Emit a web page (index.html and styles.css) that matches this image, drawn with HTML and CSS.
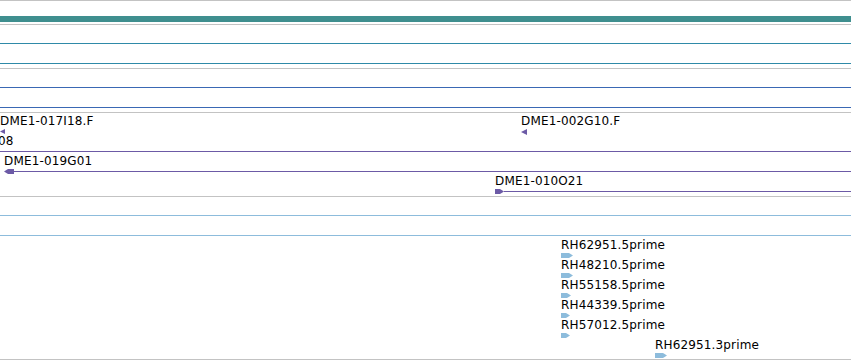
FILE: index.html
```html
<!DOCTYPE html>
<html lang="en">
<head>
  <meta charset="UTF-8" />
  <title>Track view</title>
  <link rel="stylesheet" href="styles.css">
</head>
<body>
  <div class="view">
    <!-- gene track -->
    <div class="track track-gene">
      <div class="bar bar-gene" style="top:15px"></div>
    </div>

    <!-- mRNA track -->
    <div class="track track-mrna">
      <div class="bar line-teal" style="top:18px"></div>
      <div class="bar line-teal" style="top:38px"></div>
    </div>

    <!-- CDS track -->
    <div class="track track-cds">
      <div class="bar line-blue" style="top:18px"></div>
      <div class="bar line-blue" style="top:38px"></div>
    </div>

    <!-- BAC ends -->
    <div class="track track-bac">
      <div class="feat" style="left:0;top:1px">
        <div class="label">DME1-017I18.F</div>
        <svg class="glyph" width="5" height="5"><polygon class="purple" points="0,2.5 5,0 5,5"/></svg>
      </div>
      <div class="feat" style="left:-2px;top:21px">
        <div class="label">08</div>
      </div>
      <div class="feat" style="left:521px;top:1px">
        <div class="label">DME1-002G10.F</div>
        <svg class="glyph" width="6" height="6"><polygon class="purple" points="0,3 6,0 6,6"/></svg>
      </div>

      <div class="bar line-purple" style="top:38px"></div>

      <div class="feat feat-wide" style="left:4px;top:41px">
        <div class="label">DME1-019G01</div>
        <div class="span">
          <svg width="10" height="5"><polygon class="purple" points="0,2.5 4,0 10,0 10,5 4,5"/></svg>
          <span class="stem"></span>
        </div>
      </div>

      <div class="feat feat-wide" style="left:495px;top:61px">
        <div class="label">DME1-010O21</div>
        <div class="span">
          <svg width="9" height="5"><polygon class="purple" points="0,0 5,0 9,2.5 5,5 0,5"/></svg>
          <span class="stem"></span>
        </div>
      </div>
    </div>

    <!-- cDNA 5'/3' reads -->
    <div class="track track-est">
      <div class="bar line-sky" style="top:18px"></div>
      <div class="bar line-sky" style="top:38px"></div>

      <div class="feat" style="left:561px;top:41px">
        <div class="label">RH62951.5prime</div>
        <svg class="glyph" width="12" height="5"><polygon class="sky" points="0,0 8,0 12,2.5 8,5 0,5"/></svg>
      </div>
      <div class="feat" style="left:561px;top:61px">
        <div class="label">RH48210.5prime</div>
        <svg class="glyph" width="12" height="5"><polygon class="sky" points="0,0 8,0 12,2.5 8,5 0,5"/></svg>
      </div>
      <div class="feat" style="left:561px;top:81px">
        <div class="label">RH55158.5prime</div>
        <svg class="glyph" width="10" height="5"><polygon class="sky" points="0,0 6,0 10,2.5 6,5 0,5"/></svg>
      </div>
      <div class="feat" style="left:561px;top:101px">
        <div class="label">RH44339.5prime</div>
        <svg class="glyph" width="9" height="5"><polygon class="sky" points="0,0 5,0 9,2.5 5,5 0,5"/></svg>
      </div>
      <div class="feat" style="left:561px;top:121px">
        <div class="label">RH57012.5prime</div>
        <svg class="glyph" width="9" height="5"><polygon class="sky" points="0,0 5,0 9,2.5 5,5 0,5"/></svg>
      </div>
      <div class="feat" style="left:655px;top:141px">
        <div class="label">RH62951.3prime</div>
        <svg class="glyph" width="12" height="5"><polygon class="sky" points="0,0 8,0 12,2.5 8,5 0,5"/></svg>
      </div>
    </div>
  </div>
</body>
</html>
```

FILE: styles.css
```css
* {
  box-sizing: content-box;
}

body {
  margin: 0;
  padding: 0;
  background: #fff;
  font-family: 'DejaVu Sans', sans-serif;
  overflow: hidden;
}

.view {
  width: 851px;
  display: flex;
  flex-direction: column;
  border-bottom: 1px solid #c3c3c3;
}

.track {
  position: relative;
  overflow: hidden;
  border-top: 1px solid #c3c3c3;
}

.track-gene { height: 23px; }
.track-mrna { height: 43px; }
.track-cds  { height: 43px; }
.track-bac  { height: 83px; }
.track-est  { height: 162px; }

.bar {
  position: absolute;
  left: 0;
  right: 0;
  height: 1px;
}

.bar-gene   { height: 6px; background: #3f8f8f; }
.line-teal  { background: #2f8aa8; }
.line-blue  { background: #3a68b4; }
.line-purple { background: #6c5aa6; }
.line-sky   { background: #8dbcdc; }

.feat {
  position: absolute;
  display: flex;
  flex-direction: column;
  align-items: flex-start;
}

.feat-wide {
  right: 0;
}

.label {
  font-size: 12px;
  line-height: 14px;
  height: 14px;
  letter-spacing: 0.15px;
  color: #000;
  white-space: nowrap;
}

.glyph {
  display: block;
  margin-top: 1px;
}

.span {
  display: flex;
  align-items: center;
  width: 100%;
  height: 5px;
  margin-top: 1px;
}

.span svg {
  display: block;
  flex: none;
}

.stem {
  flex: 1;
  height: 1px;
  background: #6c5aa6;
}

.purple { fill: #6c5aa6; }
.sky    { fill: #8dbcdc; }
```
